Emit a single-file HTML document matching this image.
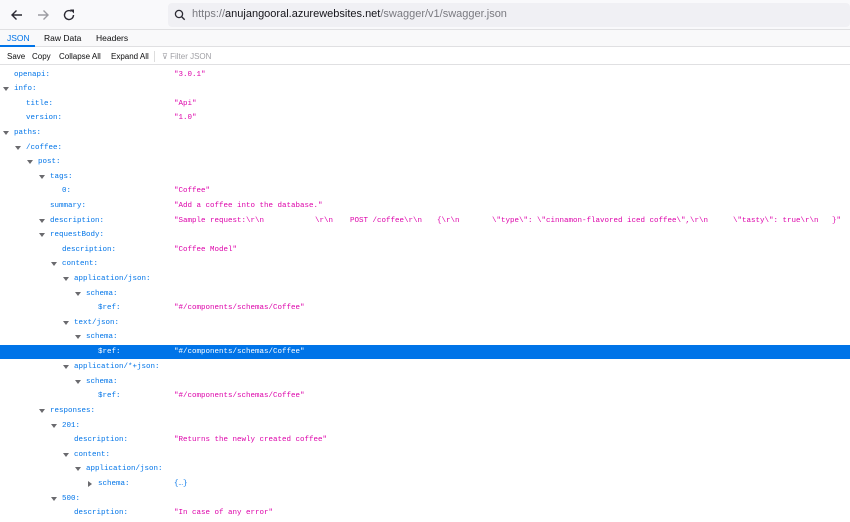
<!DOCTYPE html>
<html><head><meta charset="utf-8"><style>
*{margin:0;padding:0;box-sizing:border-box}
body{width:850px;height:520px;overflow:hidden;background:#fff;font-family:"Liberation Sans",sans-serif;position:relative}
.nav{position:absolute;left:0;top:0;width:850px;height:30px;background:#f9f9fb;border-bottom:1px solid #e0e0e2}
.url{position:absolute;left:168px;top:3px;width:682px;height:24px;background:#f0f0f4;border-radius:4px}
.url span{position:absolute;left:24px;top:5px;font-size:11px;color:#7a7a80}
.url b{font-weight:normal;color:#15141a}
.tabs{position:absolute;left:0;top:30px;width:850px;height:17px;background:#f9f9fa;border-bottom:1px solid #e0e0e2;font-size:8.5px}
.tabs span{position:absolute;top:3px;color:#0c0c0d}
.tb{position:absolute;left:0;top:47px;width:850px;height:18px;background:#fff;border-bottom:1px solid #e0e0e2;font-size:8px;color:#0c0c0d}
.tb span{position:absolute;top:5px}
.w{position:absolute;left:0;top:1.5px;width:850px;height:520px}
.r{position:absolute;left:0;width:850px;height:14.6px;font-family:"Liberation Mono",monospace;font-size:7.5px;line-height:14.6px;white-space:pre}
.k{position:absolute;color:#0074e8}
.v{position:absolute;color:#dd00a9}
.o{position:absolute;color:#0074e8}
.t{position:absolute;width:0;height:0;border-left:3px solid transparent;border-right:3px solid transparent;border-top:4px solid #6a6a6e;top:5px}
.tr{position:absolute;width:0;height:0;border-top:3px solid transparent;border-bottom:3px solid transparent;border-left:4px solid #6a6a6e;top:4px}
.sel{background:#0074e8}
.sel .k,.sel .v{color:#fff}
</style></head><body>
<div class="nav">
<svg style="position:absolute;left:10px;top:8px" width="14" height="14" viewBox="0 0 14 14"><path d="M12 7H2M6.5 2.5L2 7l4.5 4.5" stroke="#2b2a33" stroke-width="1.4" fill="none"/></svg>
<svg style="position:absolute;left:36px;top:8px" width="14" height="14" viewBox="0 0 14 14"><path d="M2 7h10M7.5 2.5L12 7l-4.5 4.5" stroke="#9c9ca2" stroke-width="1.4" fill="none"/></svg>
<svg style="position:absolute;left:62px;top:8px" width="14" height="14" viewBox="0 0 14 14"><path d="M11.5 7A4.5 4.5 0 1 1 9.5 3.3" stroke="#2b2a33" stroke-width="1.4" fill="none"/><path d="M8 1.5h4v4z" fill="#2b2a33"/></svg>
<div class="url"><svg style="position:absolute;left:6px;top:6px" width="12" height="12" viewBox="0 0 12 12"><circle cx="5" cy="5" r="3.6" stroke="#2b2a33" stroke-width="1.3" fill="none"/><path d="M7.7 7.7l3 3" stroke="#2b2a33" stroke-width="1.4"/></svg><span>https://<b>anujangooral.azurewebsites.net</b>/swagger/v1/swagger.json</span></div>
</div>
<div class="tabs"><span style="left:7px;color:#0074e8">JSON</span><span style="left:44px">Raw Data</span><span style="left:96px">Headers</span><div style="position:absolute;left:0;top:15px;width:35px;height:2px;background:#0074e8"></div></div>
<div class="tb"><span style="left:7px">Save</span><span style="left:32px">Copy</span><span style="left:59px">Collapse All</span><span style="left:111px">Expand All</span><div style="position:absolute;left:154px;top:4px;width:1px;height:11px;background:#ddd"></div><span style="left:162px;color:#a0a0a5">⊽ Filter JSON</span></div>
<div class="w">
<div class="r" style="top:66px"><span class="k" style="left:14px">openapi:</span><span class="v" style="left:174px">"3.0.1"</span></div>
<div class="r" style="top:80.6px"><i class="t" style="left:3px"></i><span class="k" style="left:14px">info:</span></div>
<div class="r" style="top:95.2px"><span class="k" style="left:26px">title:</span><span class="v" style="left:174px">"Api"</span></div>
<div class="r" style="top:109.8px"><span class="k" style="left:26px">version:</span><span class="v" style="left:174px">"1.0"</span></div>
<div class="r" style="top:124.4px"><i class="t" style="left:3px"></i><span class="k" style="left:14px">paths:</span></div>
<div class="r" style="top:139px"><i class="t" style="left:15px"></i><span class="k" style="left:26px">/coffee:</span></div>
<div class="r" style="top:153.6px"><i class="t" style="left:27px"></i><span class="k" style="left:38px">post:</span></div>
<div class="r" style="top:168.2px"><i class="t" style="left:39px"></i><span class="k" style="left:50px">tags:</span></div>
<div class="r" style="top:182.8px"><span class="k" style="left:62px">0:</span><span class="v" style="left:174px">"Coffee"</span></div>
<div class="r" style="top:197.4px"><span class="k" style="left:50px">summary:</span><span class="v" style="left:174px">"Add a coffee into the database."</span></div>
<div class="r" style="top:212px"><i class="t" style="left:39px"></i><span class="k" style="left:50px">description:</span><span class="v" style="left:174px">"Sample request:\r\n</span><span class="v" style="left:315px">\r\n</span><span class="v" style="left:350px">POST /coffee\r\n</span><span class="v" style="left:437px">{\r\n</span><span class="v" style="left:492px">\"type\": \"cinnamon-flavored iced coffee\",\r\n</span><span class="v" style="left:733px">\"tasty\": true\r\n</span><span class="v" style="left:832px">}"</span></div>
<div class="r" style="top:226.6px"><i class="t" style="left:39px"></i><span class="k" style="left:50px">requestBody:</span></div>
<div class="r" style="top:241.2px"><span class="k" style="left:62px">description:</span><span class="v" style="left:174px">"Coffee Model"</span></div>
<div class="r" style="top:255.8px"><i class="t" style="left:51px"></i><span class="k" style="left:62px">content:</span></div>
<div class="r" style="top:270.4px"><i class="t" style="left:63px"></i><span class="k" style="left:74px">application/json:</span></div>
<div class="r" style="top:285px"><i class="t" style="left:75px"></i><span class="k" style="left:86px">schema:</span></div>
<div class="r" style="top:299.6px"><span class="k" style="left:98px">$ref:</span><span class="v" style="left:174px">"#/components/schemas/Coffee"</span></div>
<div class="r" style="top:314.2px"><i class="t" style="left:63px"></i><span class="k" style="left:74px">text/json:</span></div>
<div class="r" style="top:328.8px"><i class="t" style="left:75px"></i><span class="k" style="left:86px">schema:</span></div>
<div class="r sel" style="top:343px"><span class="k" style="left:98px">$ref:</span><span class="v" style="left:174px">"#/components/schemas/Coffee"</span></div>
<div class="r" style="top:358.6px"><i class="t" style="left:63px"></i><span class="k" style="left:74px">application/*+json:</span></div>
<div class="r" style="top:373.2px"><i class="t" style="left:75px"></i><span class="k" style="left:86px">schema:</span></div>
<div class="r" style="top:387.8px"><span class="k" style="left:98px">$ref:</span><span class="v" style="left:174px">"#/components/schemas/Coffee"</span></div>
<div class="r" style="top:402.4px"><i class="t" style="left:39px"></i><span class="k" style="left:50px">responses:</span></div>
<div class="r" style="top:417px"><i class="t" style="left:51px"></i><span class="k" style="left:62px">201:</span></div>
<div class="r" style="top:431.6px"><span class="k" style="left:74px">description:</span><span class="v" style="left:174px">"Returns the newly created coffee"</span></div>
<div class="r" style="top:446.2px"><i class="t" style="left:63px"></i><span class="k" style="left:74px">content:</span></div>
<div class="r" style="top:460.8px"><i class="t" style="left:75px"></i><span class="k" style="left:86px">application/json:</span></div>
<div class="r" style="top:475.4px"><i class="tr" style="left:88px"></i><span class="k" style="left:98px">schema:</span><span class="o" style="left:174px">{…}</span></div>
<div class="r" style="top:490px"><i class="t" style="left:51px"></i><span class="k" style="left:62px">500:</span></div>
<div class="r" style="top:504.6px"><span class="k" style="left:74px">description:</span><span class="v" style="left:174px">"In case of any error"</span></div>
</div>
</body></html>
